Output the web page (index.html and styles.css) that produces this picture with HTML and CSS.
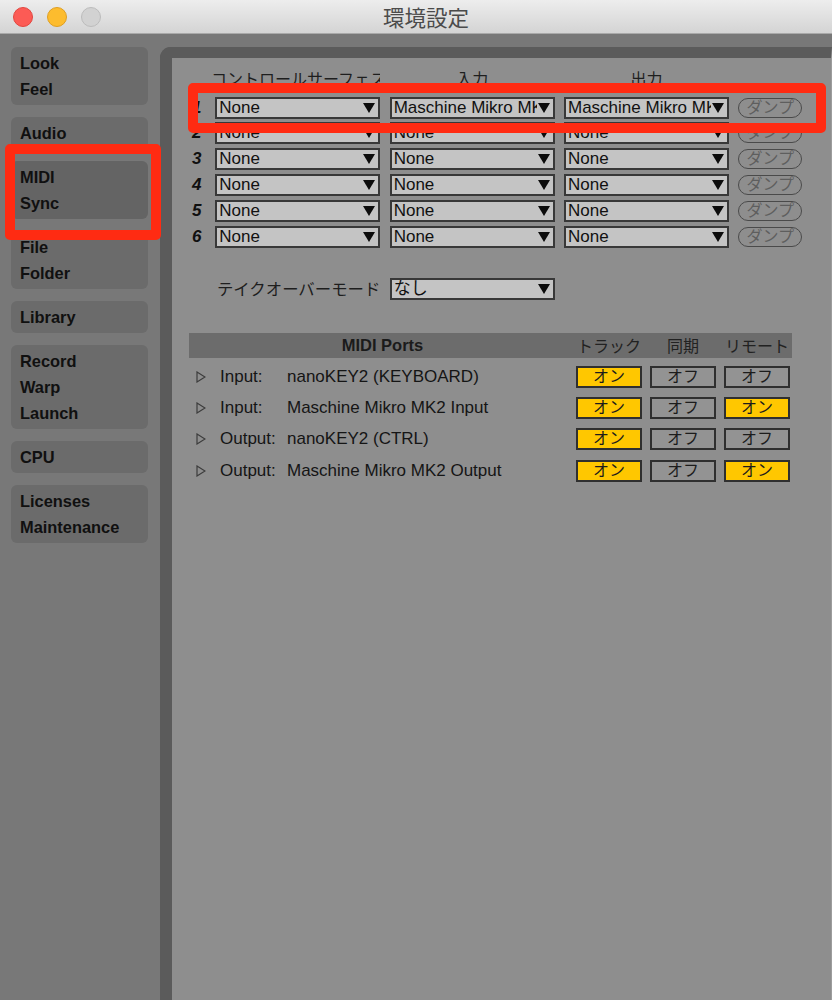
FILE: index.html
```html
<!DOCTYPE html>
<html lang="ja">
<head>
<meta charset="utf-8">
<title>環境設定</title>
<link rel="stylesheet" href="styles.css">
</head>
<body>
<div class="window">
  <header class="titlebar">
    <div class="lights">
      <span class="light close"></span>
      <span class="light minimize"></span>
      <span class="light zoom"></span>
    </div>
    <h1 class="title">環境設定</h1>
    <div></div>
  </header>

  <div class="body">
    <nav class="tabs">
      <div class="tab"><span>Look</span><span>Feel</span></div>
      <div class="tab"><span>Audio</span></div>
      <div class="tab active"><span>MIDI</span><span>Sync</span></div>
      <div class="tab"><span>File</span><span>Folder</span></div>
      <div class="tab"><span>Library</span></div>
      <div class="tab"><span>Record</span><span>Warp</span><span>Launch</span></div>
      <div class="tab"><span>CPU</span></div>
      <div class="tab"><span>Licenses</span><span>Maintenance</span></div>
    </nav>

    <main class="panel">
      <div class="surf-head">
        <div class="head-surface">コントロールサーフェス</div>
        <div class="head-center">入力</div>
        <div class="head-center">出力</div>
      </div>

      <div class="surfaces">
        <div class="num">1</div>
        <div class="select"><span class="val">None</span><svg class="arrow" viewBox="0 0 12 10"><polygon points="0,0 12,0 6,10"/></svg></div>
        <div class="select"><span class="val">Maschine Mikro MK2 Input</span><svg class="arrow" viewBox="0 0 12 10"><polygon points="0,0 12,0 6,10"/></svg></div>
        <div class="select"><span class="val">Maschine Mikro MK2 Output</span><svg class="arrow" viewBox="0 0 12 10"><polygon points="0,0 12,0 6,10"/></svg></div>
        <div class="dump">ダンプ</div>

        <div class="num">2</div>
        <div class="select"><span class="val">None</span><svg class="arrow" viewBox="0 0 12 10"><polygon points="0,0 12,0 6,10"/></svg></div>
        <div class="select"><span class="val">None</span><svg class="arrow" viewBox="0 0 12 10"><polygon points="0,0 12,0 6,10"/></svg></div>
        <div class="select"><span class="val">None</span><svg class="arrow" viewBox="0 0 12 10"><polygon points="0,0 12,0 6,10"/></svg></div>
        <div class="dump">ダンプ</div>

        <div class="num">3</div>
        <div class="select"><span class="val">None</span><svg class="arrow" viewBox="0 0 12 10"><polygon points="0,0 12,0 6,10"/></svg></div>
        <div class="select"><span class="val">None</span><svg class="arrow" viewBox="0 0 12 10"><polygon points="0,0 12,0 6,10"/></svg></div>
        <div class="select"><span class="val">None</span><svg class="arrow" viewBox="0 0 12 10"><polygon points="0,0 12,0 6,10"/></svg></div>
        <div class="dump">ダンプ</div>

        <div class="num">4</div>
        <div class="select"><span class="val">None</span><svg class="arrow" viewBox="0 0 12 10"><polygon points="0,0 12,0 6,10"/></svg></div>
        <div class="select"><span class="val">None</span><svg class="arrow" viewBox="0 0 12 10"><polygon points="0,0 12,0 6,10"/></svg></div>
        <div class="select"><span class="val">None</span><svg class="arrow" viewBox="0 0 12 10"><polygon points="0,0 12,0 6,10"/></svg></div>
        <div class="dump">ダンプ</div>

        <div class="num">5</div>
        <div class="select"><span class="val">None</span><svg class="arrow" viewBox="0 0 12 10"><polygon points="0,0 12,0 6,10"/></svg></div>
        <div class="select"><span class="val">None</span><svg class="arrow" viewBox="0 0 12 10"><polygon points="0,0 12,0 6,10"/></svg></div>
        <div class="select"><span class="val">None</span><svg class="arrow" viewBox="0 0 12 10"><polygon points="0,0 12,0 6,10"/></svg></div>
        <div class="dump">ダンプ</div>

        <div class="num">6</div>
        <div class="select"><span class="val">None</span><svg class="arrow" viewBox="0 0 12 10"><polygon points="0,0 12,0 6,10"/></svg></div>
        <div class="select"><span class="val">None</span><svg class="arrow" viewBox="0 0 12 10"><polygon points="0,0 12,0 6,10"/></svg></div>
        <div class="select"><span class="val">None</span><svg class="arrow" viewBox="0 0 12 10"><polygon points="0,0 12,0 6,10"/></svg></div>
        <div class="dump">ダンプ</div>
      </div>

      <div class="takeover">
        <div class="takeover-label">テイクオーバーモード</div>
        <div class="select"><span class="val">なし</span><svg class="arrow" viewBox="0 0 12 10"><polygon points="0,0 12,0 6,10"/></svg></div>
      </div>

      <section class="ports">
        <div class="ports-head">
          <div class="ports-title">MIDI Ports</div>
          <div class="ports-cols">
            <span>トラック</span><span>同期</span><span>リモート</span>
          </div>
        </div>

        <div class="port">
          <svg class="tri" viewBox="0 0 10 12"><polygon points="1,1 9,6 1,11"/></svg>
          <span class="kind">Input:</span>
          <span class="name">nanoKEY2 (KEYBOARD)</span>
          <div class="toggles"><span class="tog on">オン</span><span class="tog">オフ</span><span class="tog">オフ</span></div>
        </div>
        <div class="port">
          <svg class="tri" viewBox="0 0 10 12"><polygon points="1,1 9,6 1,11"/></svg>
          <span class="kind">Input:</span>
          <span class="name">Maschine Mikro MK2 Input</span>
          <div class="toggles"><span class="tog on">オン</span><span class="tog">オフ</span><span class="tog on">オン</span></div>
        </div>
        <div class="port">
          <svg class="tri" viewBox="0 0 10 12"><polygon points="1,1 9,6 1,11"/></svg>
          <span class="kind">Output:</span>
          <span class="name">nanoKEY2 (CTRL)</span>
          <div class="toggles"><span class="tog on">オン</span><span class="tog">オフ</span><span class="tog">オフ</span></div>
        </div>
        <div class="port">
          <svg class="tri" viewBox="0 0 10 12"><polygon points="1,1 9,6 1,11"/></svg>
          <span class="kind">Output:</span>
          <span class="name">Maschine Mikro MK2 Output</span>
          <div class="toggles"><span class="tog on">オン</span><span class="tog">オフ</span><span class="tog on">オン</span></div>
        </div>
      </section>
    </main>
  </div>

  <div class="mark mark-tab"></div>
  <div class="mark mark-row"></div>
</div>
</body>
</html>
```
FILE: styles.css
```css
* {
  box-sizing: border-box;
  margin: 0;
  padding: 0;
}

html,
body {
  width: 832px;
  height: 1000px;
  overflow: hidden;
}

body {
  background: #787878;
  font-family: "Liberation Sans", "Noto Sans CJK JP", sans-serif;
  color: #141414;
}

.window {
  position: relative;
  width: 832px;
  height: 1000px;
  display: flex;
  flex-direction: column;
}

/* ---------- title bar ---------- */
.titlebar {
  flex: none;
  height: 34px;
  display: grid;
  grid-template-columns: 1fr auto 1fr;
  align-items: center;
  background: linear-gradient(#ededed, #d4d4d4);
  border-bottom: 1px solid #a9a9a9;
}

.lights {
  display: flex;
  gap: 14px;
  padding-left: 13px;
}

.light {
  width: 20px;
  height: 20px;
  border-radius: 50%;
}

.close {
  background: #fc5b55;
  border: 1px solid #e2463f;
}

.minimize {
  background: #fdbc2e;
  border: 1px solid #df9f22;
}

.zoom {
  background: #d2d2d2;
  border: 1px solid #bcbcbc;
}

.title {
  padding-left: 20px;
  font-family: "Noto Sans CJK JP", sans-serif;
  font-size: 21.5px;
  font-weight: 400;
  color: #4b4b4b;
  line-height: 34px;
}

/* ---------- body ---------- */
.body {
  flex: 1;
  display: flex;
  min-height: 0;
}

.tabs {
  flex: none;
  width: 160px;
  padding: 13px 12px 0 11px;
  display: flex;
  flex-direction: column;
  gap: 12px;
}

.tab {
  display: flex;
  flex-direction: column;
  padding: 3px 0 3px 9px;
  background: #6b6b6b;
  border-radius: 6px;
  font-weight: 700;
  font-size: 16.4px;
  color: #101010;
}

.tab span {
  line-height: 26px;
}

.tab.active {
  background: #646464;
}

/* ---------- preferences panel ---------- */
.panel {
  flex: 1;
  margin-top: 13px;
  padding: 12px 0 0 17px;
  background: #8e8e8e;
  border-top: 11px solid #5b5b5b;
  border-left: 12px solid #5b5b5b;
  border-top-left-radius: 11px;
  border-right: 1px solid #9d9d9d;
}

.surf-head,
.surfaces,
.takeover {
  display: grid;
  grid-template-columns: 17px 165px 165px 165px 64px;
  column-gap: 9.33px;
}

.surf-head {
  height: 20px;
  margin-bottom: 6.7px;
  font-size: 16px;
  line-height: 20px;
  color: #1e1e1e;
}

.head-surface {
  grid-column: 1 / span 2;
  padding-left: 22px;
  white-space: nowrap;
  overflow: hidden;
}

.head-center {
  text-align: center;
}

.surfaces {
  grid-auto-rows: 22px;
  row-gap: 3.8px;
}

.num {
  padding-left: 3px;
  font-size: 17px;
  font-weight: 700;
  font-style: italic;
  line-height: 22px;
  color: #101010;
}

.select {
  height: 22px;
  display: flex;
  align-items: center;
  background: #c4c4c4;
  border: 2px solid #383838;
}

.select .val {
  flex: 1;
  min-width: 0;
  padding-left: 2px;
  font-size: 17px;
  line-height: 18px;
  white-space: nowrap;
  overflow: hidden;
  color: #111;
}

.select .arrow {
  flex: none;
  width: 12px;
  height: 10px;
  margin: 0 3px 0 1px;
  fill: #0c0c0c;
}

/* disabled "dump" pill: greyed label inside a thin rounded outline */
.dump {
  align-self: center;
  height: 20px;
  border: 1.5px solid #4a4a4a;
  border-radius: 10px;
  font-size: 16px;
  line-height: 17px;
  text-align: center;
  color: #5e5e5e;
}

.takeover {
  margin-top: 30.3px;
  height: 22px;
}

.takeover-label {
  grid-column: 1 / span 2;
  text-align: right;
  font-size: 16.4px;
  line-height: 22px;
  color: #1e1e1e;
}

/* ---------- MIDI ports ---------- */
.ports {
  width: 603px;
  margin-top: 33px;
}

.ports-head {
  height: 25px;
  display: flex;
  align-items: center;
  padding-right: 2px;
  background: #6c6c6c;
  font-size: 16px;
  color: #1b1b1b;
}

.ports-title {
  flex: 1;
  text-align: center;
  font-weight: 700;
  font-size: 16.5px;
}

.ports-cols {
  display: flex;
  gap: 8px;
}

.ports-cols span {
  width: 66px;
  text-align: center;
  color: #222;
}

.ports-head + .port {
  margin-top: 3px;
}

.port {
  height: 31.33px;
  display: flex;
  align-items: center;
  padding-right: 2px;
  font-size: 17px;
  color: #151515;
}

.tri {
  flex: none;
  width: 10px;
  height: 12px;
  margin: 0 14px 0 7px;
  fill: none;
  stroke: #3c3c3c;
  stroke-width: 1.2;
}

.kind {
  flex: none;
  width: 67px;
}

.name {
  flex: 1;
  white-space: nowrap;
}

.toggles {
  display: flex;
  gap: 8px;
}

.tog {
  width: 66px;
  height: 22px;
  border: 2px solid #2f2f2f;
  background: #939393;
  font-size: 16px;
  line-height: 18px;
  text-align: center;
  color: #1c1c1c;
}

.tog.on {
  background: #ffc700;
}

/* ---------- red highlight frames ---------- */
.mark {
  position: absolute;
  border: 10px solid #ff2b12;
  border-radius: 5px;
}

.mark-tab {
  left: 5px;
  top: 144px;
  width: 156px;
  height: 96px;
}

.mark-row {
  left: 188px;
  top: 83px;
  width: 638px;
  height: 50px;
}
```
